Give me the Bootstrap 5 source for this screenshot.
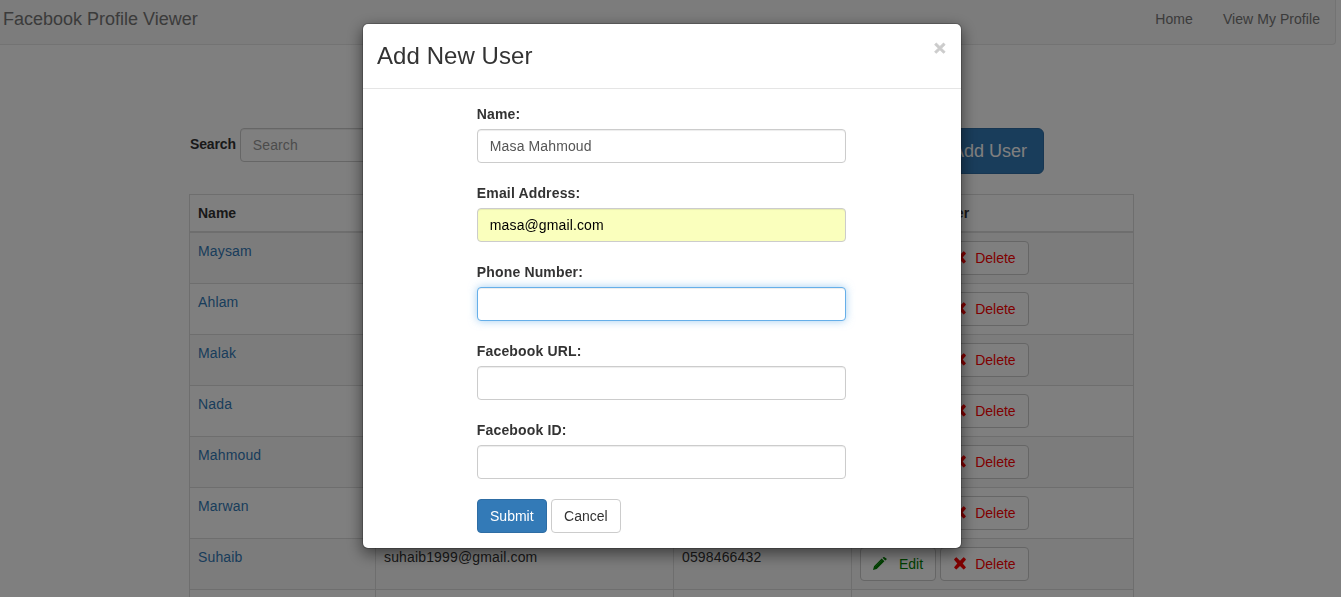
<!DOCTYPE html>
<html lang="en">
<head>
<meta charset="utf-8">
<title>Facebook Profile Viewer</title>
<link href="https://cdn.jsdelivr.net/npm/bootstrap@5.3.0/dist/css/bootstrap.min.css" rel="stylesheet">
<style>
body{font:14px/20px "Liberation Sans",Arial,sans-serif;color:#333;height:100vh;overflow:hidden;background:#fff}
a{color:#337ab7;text-decoration:none}
.topbar{width:1336px;height:45px;padding:9px 15px 0 3px;background:#f8f8f8;border:solid #e7e7e7;border-width:0 1px 1px 0;border-radius:0 0 4px 0;color:#777}
.topbar a{color:#777}
.topbar .site-name{font-size:18px}
.topbar .links{gap:30px;letter-spacing:.06px}
.page{width:945px;height:469px;overflow:hidden;margin:83px 0 0 189px}
.tools{height:66px;padding-left:1px;padding-right:90px}
.tools label{width:46px;margin:6px 4px 0 0;letter-spacing:-.15px}
label{font-weight:700;margin-bottom:5px}
.form-control{height:34px;padding:6px 12px;font-size:14px;line-height:20px;letter-spacing:.12px;color:#555;border:1px solid #ccc;border-radius:4px;box-shadow:inset 0 1px 1px rgba(0,0,0,.075)}
.form-control::placeholder{color:#999}
.form-control:focus{border-color:#66afe9;box-shadow:inset 0 1px 1px rgba(0,0,0,.075),0 0 8px rgba(102,175,233,.6);color:#555}
.form-control.filled{background:#faffbd;color:#000}
.btn{font-size:14px;line-height:20px;padding:6px 12px;border-radius:4px}
.btn-primary{background:#337ab7;border-color:#2e6da4}
.btn-plain{background:#fff;border-color:#ccc;color:#333}
.btn-add{font-size:18px;line-height:24px;padding:10px 16px;border-radius:6px}
.form-buttons .btn{width:70px;padding-left:0;padding-right:0}
.users{table-layout:fixed;width:945px;border-collapse:collapse;color:#333;margin:0}
.users th,.users td{border:1px solid #ddd;padding:8px;vertical-align:top;line-height:20px}
.users th{border-bottom-width:2px;height:37px;padding-bottom:7px}
.users th:last-child{letter-spacing:.12px}
.users td{height:51px;letter-spacing:.15px}
.users tbody tr:nth-child(odd){background:#f9f9f9}
.actions{gap:4px;letter-spacing:0}
.actions .btn{display:flex;align-items:center}
.edit{color:green}.edit svg{margin-right:12px}
.remove{color:red}.remove svg{margin-right:8px}
.modal-backdrop{--bs-backdrop-opacity:.5}
.modal{padding-right:17px;overflow:hidden}
.modal-dialog{width:600px;max-width:600px;margin:23px auto}
.modal-content{border:1px solid rgba(0,0,0,.2);border-radius:6px;background-clip:padding-box;box-shadow:0 5px 15px rgba(0,0,0,.5);color:#333}
.modal-header{height:65px;padding:15px 15px 15px 14px;border-bottom:1px solid #e5e5e5;align-items:flex-start}
.modal-title{font-size:24px;line-height:26px;font-weight:400;margin-top:4px;letter-spacing:.07px}
.dismiss{font-size:21px;line-height:21px;font-weight:700;color:#000;opacity:.2;border:0;padding:0;background:none;margin-top:-2px;-webkit-text-stroke:.7px #000}
.modal-body{padding:15px 15px 15px 14px}
.modal-body .row{--bs-gutter-x:30px}
.field{margin-bottom:20px}
.field label{display:block;letter-spacing:.15px}
</style>
</head>
<body>
<nav class="topbar d-flex justify-content-between">
  <a class="site-name" href="#">Facebook Profile Viewer</a>
  <div class="links d-flex"><a href="#">Home</a><a href="#">View My Profile</a></div>
</nav>
<main class="page">
  <div class="tools d-flex justify-content-between align-items-start">
    <div class="d-flex"><label for="q">Search</label><input id="q" class="form-control" placeholder="Search"></div>
    <button class="btn btn-primary btn-add">Add User</button>
  </div>
  <table class="users">
    <colgroup><col style="width:186px"><col style="width:298px"><col style="width:178px"><col></colgroup>
    <thead><tr><th>Name</th><th>Email</th><th>Phone Number</th><th>Edit/Delete User</th></tr></thead>
    <tbody id="rows"></tbody>
  </table>
</main>

<div class="modal-backdrop fade show"></div>
<div class="modal d-block" tabindex="-1">
  <div class="modal-dialog">
    <div class="modal-content">
      <div class="modal-header justify-content-between">
        <h3 class="modal-title">Add New User</h3>
        <button class="dismiss" aria-label="Close">×</button>
      </div>
      <div class="modal-body">
        <div class="row"><form class="col-8 offset-2">
          <div class="field"><label>Name:</label><input class="form-control" value="Masa Mahmoud"></div>
          <div class="field"><label>Email Address:</label><input class="form-control filled" value="masa@gmail.com"></div>
          <div class="field"><label>Phone Number:</label><input class="form-control" id="phone" style="caret-color:transparent"></div>
          <div class="field"><label>Facebook URL:</label><input class="form-control"></div>
          <div class="field"><label>Facebook ID:</label><input class="form-control"></div>
          <div class="form-buttons d-flex gap-1"><button type="button" class="btn btn-primary">Submit</button><button type="button" class="btn btn-plain">Cancel</button></div>
        </form></div>
      </div>
    </div>
  </div>
</div>
<script src="https://cdn.jsdelivr.net/npm/bootstrap@5.3.0/dist/js/bootstrap.bundle.min.js"></script>
<script>
const users = [['Maysam'],['Ahlam'],['Malak'],['Nada'],['Mahmoud'],['Marwan'],['Suhaib','suhaib1999@gmail.com','0598466432'],['']];
const pencil = '<svg width="14" height="14" viewBox="0 0 14 14" fill="currentColor"><path d="M0 13l1-3.700L8.700 1.600l2.700 2.700L3.700 12zM9.500.8l.8-.6q.6-.5 1.200 0L13.400 1.500q.6.600 0 1.200L12.200 3.500z"/><path d="M2.600 9.600l6.300-6.300" stroke="#fff" stroke-opacity=".35" stroke-width=".5"/></svg>';
const cross = '<svg width="14" height="14" viewBox="0 0 14 14" fill="currentColor"><path d="M3.700.5L7 3.800 10.300.5q.4-.3.800 0l1.600 1.600q.3.400 0 .8L9.700 6.400l3 3.500q.3.400 0 .8l-1.600 1.600q-.4.300-.8 0L7 9l-3.300 3.300q-.4.300-.8 0L1.300 10.700q-.3-.4 0-.8l3-3.500-3-3.500q-.3-.4 0-.8L2.900.5q.4-.3.800 0z"/></svg>';
document.getElementById('rows').innerHTML = users.map(([name, mail = '', phone = '']) =>
  `<tr><td><a href="#">${name}</a></td><td>${mail}</td><td>${phone}</td><td>${name && `<div class="actions d-flex">
   <button class="btn btn-plain edit">${pencil}Edit</button><button class="btn btn-plain remove">${cross}Delete</button></div>`}</td></tr>`).join('');
document.getElementById('phone').focus();
</script>
</body>
</html>
